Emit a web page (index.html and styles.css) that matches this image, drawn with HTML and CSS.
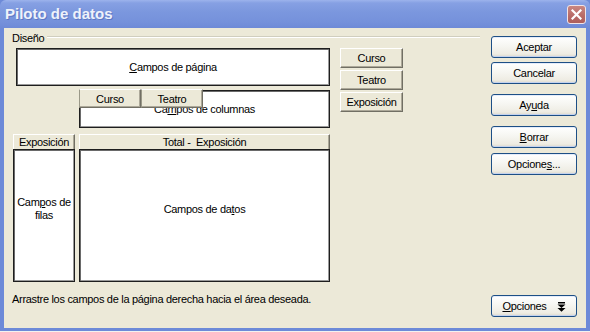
FILE: index.html
```html
<!DOCTYPE html>
<html lang="es">
<head>
<meta charset="utf-8">
<title>Piloto de datos</title>
<link rel="stylesheet" href="styles.css">
</head>
<body>
<div class="window">
  <div class="titlebar">
    <span class="title">Piloto de datos</span>
    <span class="close">
      <svg width="11" height="11" viewBox="0 0 11 11"><path d="M1.5 1.5 L9.5 9.5 M9.5 1.5 L1.5 9.5" stroke="#fff" stroke-width="2.2" stroke-linecap="square"/></svg>
    </span>
  </div>
  <div class="client">
    <div class="main">
      <div class="design">
        <div class="legend"><span>Diseño</span><i class="rule"></i></div>
        <div class="layout">
          <div class="grid">
            <div class="box page"><span><u>C</u>ampos de página</span></div>
            <div class="colarea">
              <div class="box cols"><span>Ca<u>m</u>pos de columnas</span></div>
              <div class="dragged">
                <span class="field wide">Curso</span>
                <span class="field wide">Teatro</span>
              </div>
            </div>
            <div class="hdr">Exposición</div>
            <div class="hdr">Total -&nbsp; Exposición</div>
            <div class="box rows"><span>Cam<u>p</u>os de<br>filas</span></div>
            <div class="box data"><span>Campos de da<u>t</u>os</span></div>
          </div>
          <div class="fieldlist">
            <span class="field">Curso</span>
            <span class="field">Teatro</span>
            <span class="field">Exposición</span>
          </div>
        </div>
      </div>
      <div class="buttons">
        <span class="btn">Aceptar</span>
        <span class="btn g4">Cancelar</span>
        <span class="btn g10">Ay<u>u</u>da</span>
        <span class="btn g10"><u>B</u>orrar</span>
        <span class="btn g5">Opcione<u>s</u>...</span>
      </div>
    </div>
    <div class="footer">
      <span class="hint">Arrastre los campos de la página derecha hacia el área deseada.</span>
      <span class="btn more"><span><u>O</u>pciones</span>
        <svg width="9" height="10" viewBox="0 0 9 10"><rect x="1" y="0" width="7" height="1.5" fill="#000"/><path d="M0.5 2.5 H8.5 L4.5 6 Z M0.5 6 H8.5 L4.5 9.8 Z" fill="#000"/></svg>
      </span>
    </div>
  </div>
</div>
</body>
</html>
```
FILE: styles.css
```css
html, body {
  margin: 0;
  padding: 0;
  background: #f2f2f0;
}

body {
  width: 590px;
  height: 332px;
  overflow: hidden;
  font-family: "Liberation Sans", Arial, sans-serif;
  font-size: 11px;
  letter-spacing: -0.3px;
  color: #000;
}

.window {
  width: 590px;
  height: 331px;
  box-sizing: border-box;
  background: #6f8cd9;
  border-left: 4px solid #6d8ad8;
  border-right: 4px solid #6d8ad8;
  border-bottom: 3px solid #6d8ad8;
  display: flex;
  flex-direction: column;
}

.titlebar {
  height: 28px;
  margin: 0 -4px;
  padding: 0 5px 0 5px;
  box-sizing: border-box;
  display: flex;
  align-items: center;
  justify-content: space-between;
  background: linear-gradient(#9cb3ec 0, #86a0e3 3px, #7b97de 12px, #7591db 22px, #6e8ad7 28px);
  border-radius: 6px 6px 0 0;
}

.title {
  font-family: "Liberation Sans", Arial, sans-serif;
  font-weight: bold;
  font-size: 15px;
  letter-spacing: 0;
  color: #eef2fb;
  text-shadow: 1px 1px 0 #5e78c4;
  margin-top: -1px;
}

.close {
  width: 19px;
  height: 19px;
  box-sizing: border-box;
  margin-right: -1px;
  margin-top: 1px;
  border: 1px solid #f1e4e6;
  border-radius: 3px;
  background: linear-gradient(#c98781, #b86a66 60%, #ae5f5c);
  display: flex;
  align-items: center;
  justify-content: center;
}

.client {
  height: 300px;
  box-sizing: border-box;
  background: #ece9d8;
  padding: 3px 9px 11px 8px;
  display: flex;
  flex-direction: column;
}

.main {
  display: flex;
  gap: 11px;
}

.design {
  width: 468px;
}

.legend {
  height: 13px;
  display: flex;
  align-items: center;
}

.rule {
  flex: 1;
  margin-left: 3px;
  margin-top: -1px;
  height: 1px;
  background: #d0cebf;
  border-bottom: 1px solid #fff;
}

.layout {
  margin: 4px 0 0 1px;
  display: flex;
  align-items: flex-start;
}

.grid {
  display: grid;
  grid-template-columns: 62px 251px;
  column-gap: 4px;
}

.box {
  background: #fff;
  border: 1px solid #1e1e1e;
  box-shadow: inset 1px 1px 0 #6a6a6a, inset -1px -1px 0 #9a9a9a;
  box-sizing: border-box;
  display: flex;
  align-items: center;
  justify-content: center;
  text-align: center;
}

.page {
  grid-column: 1 / 3;
  margin-left: 3px;
  height: 38px;
}

.colarea {
  grid-column: 2;
  position: relative;
  margin-top: 3px;
  padding-top: 1px;
  height: 39px;
  box-sizing: border-box;
}

.cols {
  height: 38px;
}

.dragged {
  position: absolute;
  left: 0;
  top: 0;
  display: flex;
}

.field {
  display: flex;
  align-items: center;
  justify-content: center;
  height: 20px;
  width: 63px;
  box-sizing: border-box;
  background: #ece9d8;
  border-top: 1px solid #fff;
  border-left: 1px solid #fff;
  border-right: 1px solid #716f64;
  border-bottom: 1px solid #716f64;
  box-shadow: inset -1px -1px 0 #aca899;
  white-space: nowrap;
}

.field.wide {
  width: 62px;
  height: 19px;
  border-left-color: #9a9888;
}

.hdr {
  margin-top: 6px;
  height: 15px;
  box-sizing: border-box;
  background: #ece9d8;
  border-top: 1px solid #fff;
  border-left: 1px solid #fff;
  border-right: 1px solid #716f64;
  box-shadow: inset -1px 0 0 #aca899;
  display: flex;
  align-items: center;
  justify-content: center;
  white-space: nowrap;
}

.rows, .data {
  height: 133px;
  padding-bottom: 14px;
}

.rows span {
  line-height: 13px;
  white-space: nowrap;
}

.fieldlist {
  margin-left: 10px;
  display: flex;
  flex-direction: column;
  gap: 2px;
}

.buttons {
  width: 86px;
  padding-top: 5px;
  display: flex;
  flex-direction: column;
}

.btn {
  height: 22px;
  box-sizing: border-box;
  border: 1px solid #1d4f86;
  border-radius: 3px;
  background: linear-gradient(#ffffff, #f7f7f3 40%, #eeece3 85%, #dcd8cb);
  box-shadow: inset 0 -1px 0 #c3d2ee, inset 0 1px 0 #e4ecfa;
  display: flex;
  align-items: center;
  justify-content: center;
  white-space: nowrap;
}

.g4 { margin-top: 4px; }
.g5 { margin-top: 5px; }
.g10 { margin-top: 10px; }

.footer {
  margin-top: auto;
  display: flex;
  justify-content: space-between;
  align-items: flex-start;
}

.hint {
  margin-top: -2px;
}

.more {
  width: 86px;
  gap: 10px;
  margin-right: 0;
}

.more svg {
  margin-top: 1px;
}
```
